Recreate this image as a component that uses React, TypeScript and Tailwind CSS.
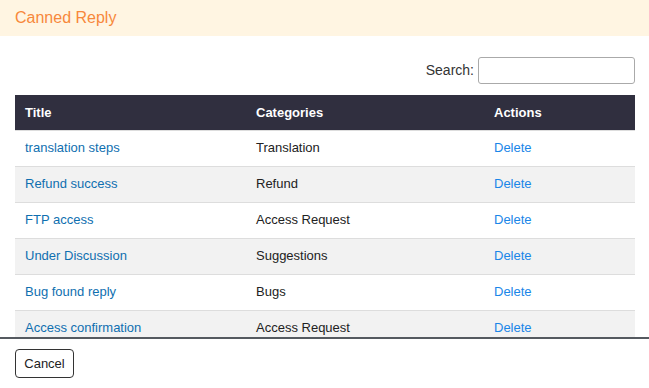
import React from "react";

const rows = [
  ["translation steps", "Translation"],
  ["Refund success", "Refund"],
  ["FTP access", "Access Request"],
  ["Under Discussion", "Suggestions"],
  ["Bug found reply", "Bugs"],
  ["Access confirmation", "Access Request"],
];

export default function App() {
  return (
    <div className="w-[649px] h-[388px] bg-white flex flex-col overflow-hidden" style={{ fontFamily: '"Liberation Sans", Arial, sans-serif' }}>
      <div className="h-[36px] shrink-0 bg-[#fff5e2] flex items-center px-[15px]">
        <span className="text-[16px] text-[#f7883b]">Canned Reply</span>
      </div>
      <div className="h-[301px] shrink-0 overflow-hidden pl-[15px] pr-[14px]">
        <div className="flex justify-end items-center mt-[21px] h-[27px] text-[14px] text-[#333]">
          <span className="mr-[4px]">Search:</span>
          <input className="w-[157px] h-[27px] border border-[#aaa] rounded-[3px] bg-white outline-none" />
        </div>
        <table className="w-[620px] mt-[11px] border-collapse text-[13px]">
          <thead>
            <tr className="bg-[#302f3f] text-white h-[35px] border-b border-[#ddd]">
              <th className="text-left font-bold px-[10px] w-[231px]">Title</th>
              <th className="text-left font-bold px-[10px] w-[238px]">Categories</th>
              <th className="text-left font-bold px-[10px]">Actions</th>
            </tr>
          </thead>
          <tbody>
            {rows.map(([t, c], i) => (
              <tr key={i} className={`h-[36px] border-b border-[#ddd] ${i % 2 === 1 ? "bg-[#f2f2f2]" : "bg-white"}`}>
                <td className="px-[10px] text-[#0f6fb0]">{t}</td>
                <td className="px-[10px] text-[#222]">{c}</td>
                <td className="px-[10px] text-[#1a86e8]">Delete</td>
              </tr>
            ))}
          </tbody>
        </table>
      </div>
      <div className="border-t-2 border-[#555a60] flex-1 px-[15px] pt-[10px]">
        <button className="h-[29px] w-[59px] border border-[#333] rounded-[4px] bg-white text-[13px] text-[#222]">Cancel</button>
      </div>
    </div>
  );
}
